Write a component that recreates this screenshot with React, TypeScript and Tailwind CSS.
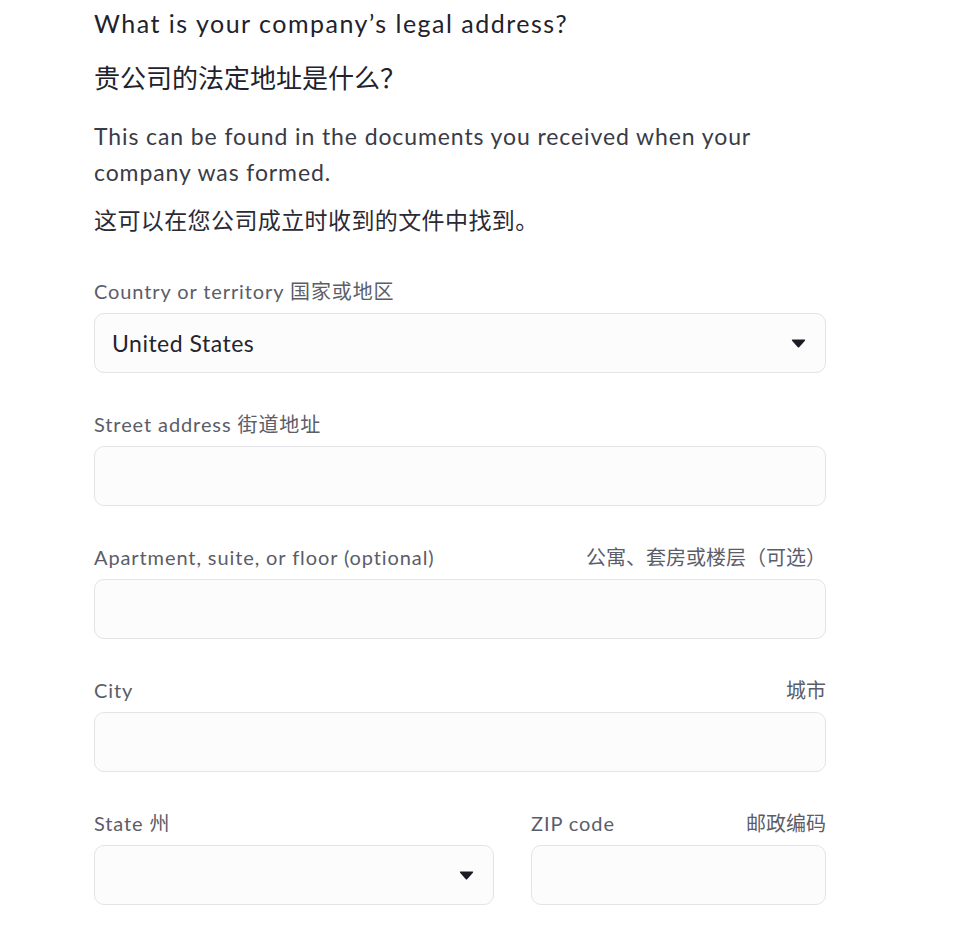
const font = "font-['Lato','Noto_Sans_CJK_SC',sans-serif]"

const Caret = () => (
  <svg width="15" height="9" viewBox="0 0 15 9" className="shrink-0">
    <path d="M1.6 0.5 H13.4 Q14.8 0.5 13.9 1.7 L8.4 7.9 Q7.5 8.9 6.6 7.9 L1.1 1.7 Q0.2 0.5 1.6 0.5 Z" fill="#1b1b26" />
  </svg>
)

interface FieldProps {
  label: string
  right?: string
  value?: string
  select?: boolean
  className?: string
}

const Field = ({ label, right, value, select, className = '' }: FieldProps) => (
  <div className={`flex flex-col ${className}`}>
    <div className="flex justify-between items-center h-6 text-[20px] leading-6 text-[#5b5d68] tracking-[0.9px]">
      <span>{label}</span>
      {right && <span className="tracking-normal">{right}</span>}
    </div>
    <div className="mt-[10px] h-[60px] rounded-[10px] border border-[#e4e4e8] bg-[#fcfcfc] flex items-center justify-between pl-[17px] pr-[19px]">
      <span className="text-[23px] text-[#24242f] tracking-[0.5px]">{value}</span>
      {select && <Caret />}
    </div>
  </div>
)

export default function App() {
  return (
    <div className={`${font} bg-white min-h-[934px] w-[953px] pl-[94px]`}>
      <div className="w-[732px] pb-10">
        <h1 className="mt-[7px] text-[25px] leading-8 text-[#22222d] tracking-[1.5px]">
          What is your company’s legal address?
        </h1>
        <h2 className="mt-[23px] text-[26px] leading-8 text-[#22222d]">
          贵公司的法定地址是什么？
        </h2>
        <p className="mt-6 text-[23px] leading-9 text-[#3a3b47] tracking-[0.9px] w-[700px]">
          This can be found in the documents you received when your company was formed.
        </p>
        <p className="mt-3 text-[23px] leading-9 text-[#2a2a35] tracking-[0.4px]">
          这可以在您公司成立时收到的文件中找到。
        </p>

        <div className="mt-[41px] flex flex-col gap-[39px]">
          <Field label="Country or territory 国家或地区" value="United States" select />
          <Field label="Street address 街道地址" />
          <Field label="Apartment, suite, or floor (optional)" right="公寓、套房或楼层（可选）" />
          <Field label="City" right="城市" />
          <div className="flex gap-[37px]">
            <Field label="State 州" select className="w-[400px]" />
            <Field label="ZIP code" right="邮政编码" className="flex-1" />
          </div>
        </div>
      </div>
    </div>
  )
}
